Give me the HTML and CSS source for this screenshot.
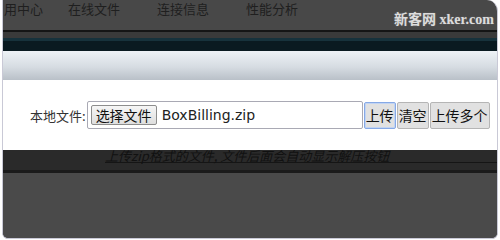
FILE: index.html
```html
<!DOCTYPE html>
<html lang="zh-CN">
<head>
    <meta charset="UTF-8">
    <meta name="viewport" content="width=device-width, initial-scale=1.0">
    <title>文件管理</title>
    <link rel="stylesheet" href="styles.css">
</head>
<body>
<div class="frame">
    <div class="nav">
        <span>用中心</span>
        <span>在线文件</span>
        <span>连接信息</span>
        <span>性能分析</span>
    </div>
    <div class="mark">新客网 xker.com</div>
    <div class="stripes">
        <div class="s1"></div>
        <div class="s2"></div>
        <div class="s3"></div>
        <div class="s4"></div>
    </div>
    <div class="modal">
        <div class="modal-head"></div>
        <div class="modal-body">
            <form class="upload" onsubmit="event.preventDefault()">
                <span class="label">本地文件:</span>
                <div class="filebox">
                    <span class="choose">选择文件</span>
                    <span class="fname">BoxBilling.zip</span>
                </div>
                <button class="btn focus">上传</button>
                <button class="btn">清空</button>
                <button class="btn">上传多个</button>
            </form>
        </div>
    </div>
    <div class="hint">
        <p>上传zip格式的文件, 文件后面会自动显示解压按钮</p>
    </div>
    <div class="rest"></div>
</div>
</body>
</html>
```

FILE: styles.css
```css
*{
    margin: 0;
    padding: 0;
    box-sizing: border-box;
}
body{
    background: #fff;
    font-family: "Noto Sans CJK SC", sans-serif;
}
.frame{
    position: relative;
    margin-left: 2px;
    width: 496px;
    height: 239px;
    border: 1px solid #c9c9d6;
    border-top: 0;
    border-radius: 0 11px 6px 6px;
    background: #484848;
    overflow: hidden;
}
.nav{
    display: grid;
    grid-template-columns: 64px 89px 89px 1fr;
    height: 30px;
    padding-left: 1px;
    padding-top: 2px;
    font-size: 13px;
    line-height: 13px;
    color: #1f1f1f;
    white-space: nowrap;
}
.mark{
    position: absolute;
    top: 8px;
    left: 391px;
    font-family: "Liberation Serif", "Noto Sans CJK SC", serif;
    font-size: 14px;
    font-weight: bold;
    color: #dcdcdc;
    text-shadow: 0 0 2px #666, 0 0 1px #666;
}
.stripes .s1{
    height: 2px;
    background: #151515;
}
.stripes .s2{
    height: 6px;
    background: #3a3a3a;
}
.stripes .s3{
    height: 3px;
    background: #17323c;
}
.stripes .s4{
    height: 10px;
    background: #0a1a21;
}
.modal{
    height: 99px;
    background: #fff;
}
.modal-head{
    height: 29px;
    background: linear-gradient(#eef2f6, #d6dce2 55%, #b9c0c8);
}
.modal-body{
    height: 70px;
    display: flex;
    align-items: center;
    padding-left: 27px;
}
.upload{
    display: flex;
    align-items: center;
    font-size: 13px;
    color: #333;
    white-space: nowrap;
}
.label{
    flex-shrink: 0;
    margin-right: 1px;
}
.filebox{
    flex-shrink: 0;
    display: flex;
    align-items: center;
    width: 276px;
    height: 28px;
    border: 1px solid #a9a9b4;
    border-radius: 2px;
    padding-left: 3px;
}
.choose{
    height: 20px;
    width: 66px;
    border: 1px solid #8d8d8d;
    border-radius: 2px;
    background: linear-gradient(#f6f6f6, #dedede);
    font-size: 14px;
    line-height: 18px;
    text-align: center;
    color: #111;
}
.fname{
    margin-left: 5px;
    font-family: "DejaVu Sans", sans-serif;
    font-size: 14px;
    color: #222;
}
.btn{
    flex-shrink: 0;
    height: 27px;
    margin-left: 1px;
    padding: 0 1px;
    border: 1px solid #b5b5b5;
    border-radius: 2px;
    background: #e1e1e1;
    font-family: "Noto Sans CJK SC", sans-serif;
    font-size: 14px;
    color: #111;
    white-space: nowrap;
}
.btn.focus{
    border-color: #86a9e6;
    box-shadow: inset 0 0 0 1px #c2d4f2;
}
.hint{
    height: 23px;
    background: #2a2a2a;
    border-bottom: 3px solid #1b1b1b;
}
.hint p{
    margin-left: 102px;
    font-size: 13px;
    line-height: 12px;
    font-style: italic;
    color: #111;
    border-bottom: 1px solid #151515;
}
.rest{
    height: 90px;
    background: #4a4a4a;
}
```
